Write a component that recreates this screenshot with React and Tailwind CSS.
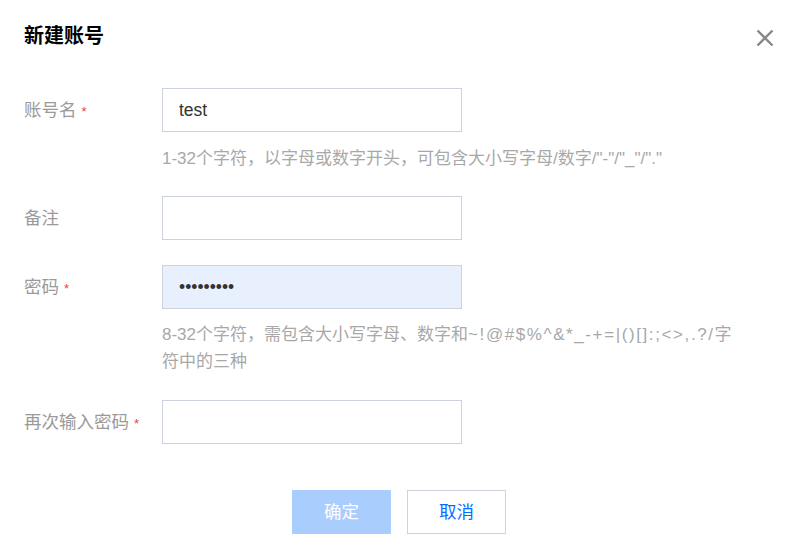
import { useState } from 'react';

const font = { fontFamily: '"Liberation Sans", "Noto Sans CJK SC", sans-serif' };

function Label({ text, required }) {
  return (
    <div className="w-[138px] shrink-0 h-[44px] flex items-center text-[17.5px] text-[#9a9a9a]">
      <span>{text}</span>
      {required && <span className="ml-[5px] mt-[3px] text-[13px] leading-none text-[#e54545]">*</span>}
    </div>
  );
}

function Field({ value, type = 'text', filled }) {
  return (
    <input
      type={type}
      readOnly
      value={value}
      className={`w-[300px] h-[44px] border border-[#cdd3de] px-4 text-[17.5px] text-[#333] outline-none ${
        filled ? 'bg-[#e8f0fe]' : 'bg-white'
      }`}
      style={font}
    />
  );
}

export default function App() {
  const [open] = useState(true);
  if (!open) return null;
  return (
    <div className="w-[788px] h-[554px] bg-white px-6 overflow-hidden" style={font}>
      <div className="h-[72px] flex items-center justify-between">
        <h2 className="text-[20px] font-bold text-black leading-7">新建账号</h2>
        <button className="mr-[-10px] mt-[3px] text-[#888]" aria-label="关闭">
          <svg width="18" height="18" viewBox="0 0 18 18">
            <path d="M1.5 1.5 L16.5 16.5 M16.5 1.5 L1.5 16.5" stroke="currentColor" strokeWidth="2.4" />
          </svg>
        </button>
      </div>

      <div className="mt-4 flex">
        <Label text="账号名" required />
        <Field value="test" />
      </div>
      <p className="ml-[138px] mt-[13px] text-[17px] leading-[27px] text-[#a8a8a8]">
        1-32个字符，以字母或数字开头，可包含大小写字母/数字/"-"/"_"/"."
      </p>

      <div className="mt-6 flex">
        <Label text="备注" />
        <Field value="" />
      </div>

      <div className="mt-[25px] flex">
        <Label text="密码" required />
        <Field value="123456789" type="password" filled />
      </div>
      <p className="ml-[138px] mt-3 text-[17px] leading-[27px] text-[#a8a8a8]">
        8-32个字符，需包含大小写字母、数字和
        <span className="tracking-[1.6px]">~!@#$%^&amp;*_-+=|(){}[]:;&lt;&gt;,.?/</span>字
        <br />
        符中的三种
      </p>

      <div className="mt-[25px] flex">
        <Label text="再次输入密码" required />
        <Field value="" />
      </div>

      <div className="mt-[46px] flex justify-center gap-4 pl-[10px]">
        <button className="w-[99px] h-[44px] bg-[#a9cdfd] text-white text-[17.5px]">确定</button>
        <button className="w-[99px] h-[44px] border border-[#cdd3de] bg-white text-[#006eff] text-[17.5px]">
          取消
        </button>
      </div>
    </div>
  );
}
